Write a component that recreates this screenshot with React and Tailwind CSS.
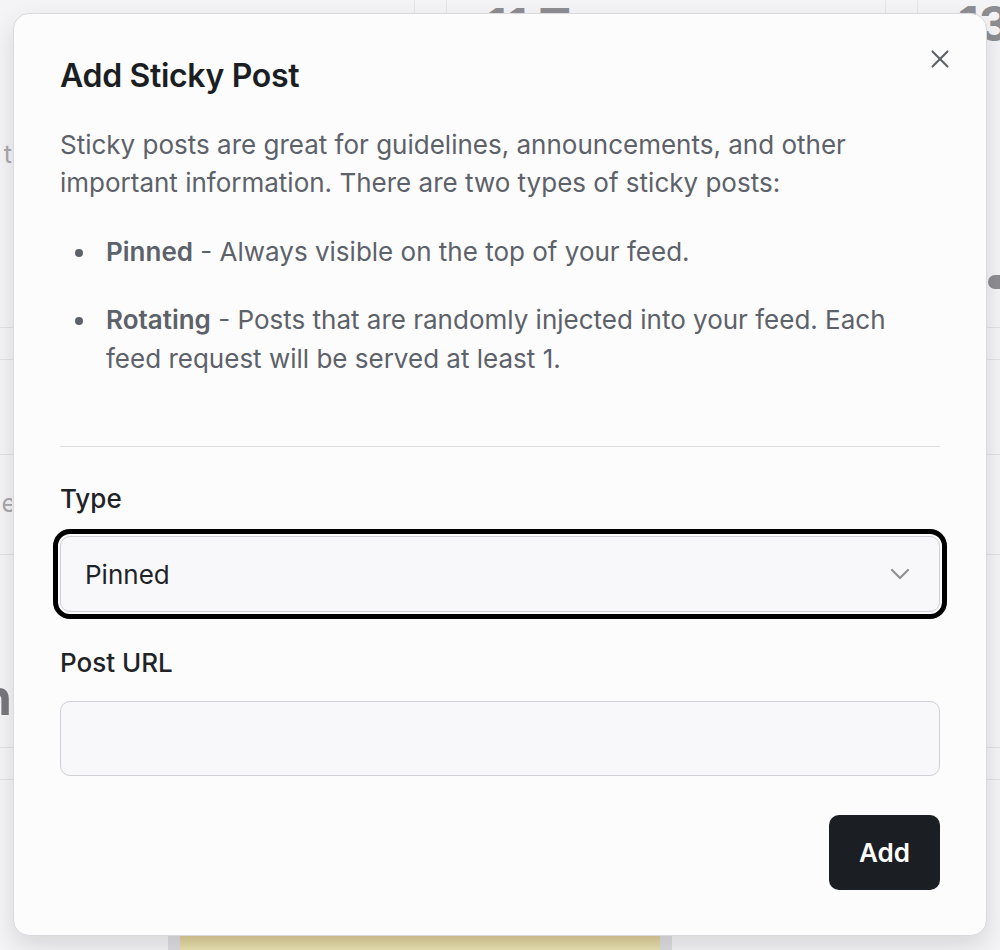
import { X } from 'lucide-react';

const ROWS = [
  { h: 'h-[280px]', left: 't', leftPad: 'pt-[88px]', leftTone: 'text-[#a8a8ad] font-normal text-[25px]', lump: true },
  { h: 'h-[32px]' },
  { h: 'h-[95px]' },
  { h: 'h-[100px]', left: 'e', leftPad: 'pt-[30px] -mr-[4px]', leftTone: 'text-[#a8a8ad] font-normal text-[25px]' },
  { h: 'h-[193px]', left: 'In', leftPad: 'pt-[112px]', leftTone: 'text-[#77777c] font-bold text-[50px] leading-[60px]' },
  { h: 'h-[32px]' },
];

function Backdrop() {
  return (
    <div className="flex h-full flex-col">
      <div className="flex h-[48px] shrink-0">
        <div className="w-[415px] border-r border-[#e4e4e8]" />
        <div className="w-[32px] border-r border-[#e4e4e8]" />
        <div className="w-[439px] overflow-hidden border-r border-[#e4e4e8] pl-[39px] pt-[2px] text-[48px] font-bold leading-[48px] text-[#8d8d92]">
          11 Tue
        </div>
        <div className="w-[32px] border-r border-[#e4e4e8]" />
        <div className="flex-1 overflow-hidden pl-[40px] text-[48px] font-bold leading-[48px] text-[#8d8d92]">
          13
        </div>
      </div>
      <div className="flex flex-col">
        {ROWS.map((row, i) => (
          <div key={i} className={`${row.h} flex justify-between overflow-hidden border-b border-[#e2e2e6]`}>
            <div className="w-[12px] overflow-hidden">
              {row.left && (
                <div className={`flex justify-end ${row.leftPad} ${row.leftTone}`}>{row.left}</div>
              )}
            </div>
            <div className="w-[13px]">
              {row.lump && <div className="ml-[1px] mt-[227px] h-[14px] w-[12px] rounded-l-full bg-[#8d8d92]" />}
            </div>
          </div>
        ))}
      </div>
      <div className="flex flex-1 flex-col justify-end">
        <div className="ml-[168px] h-[14px] w-[504px] border-x-[12px] border-[#dedee2] bg-gradient-to-b from-[#dccd98] to-[#ebe3b2]" />
      </div>
    </div>
  );
}

export default function App() {
  return (
    <div className="relative h-[950px] w-[1000px] overflow-hidden bg-[#f4f4f6] font-[Inter,'Noto_Sans',sans-serif]">
      <Backdrop />

      <div className="absolute left-[13px] top-[13px] h-[923px] w-[974px] rounded-[16px] border border-[#d9d9de] bg-[#fcfcfc] px-[46px] pt-[42px] shadow-[0_10px_24px_rgba(0,0,0,0.12)]">
        <button className="absolute right-[31px] top-[30px] text-[#5f6368]">
          <X size={30} strokeWidth={1.7} />
        </button>

        <h2 className="text-[32px] font-semibold leading-[40px] tracking-[-0.01em] text-[#1b1e22]">Add Sticky Post</h2>

        <p className="mt-[30px] text-[26px] leading-[38.4px] text-[#5d6169]">
          Sticky posts are great for guidelines, announcements, and other important information. There are two types of sticky posts:
        </p>

        <ul className="mt-[30px] space-y-[30px] text-[26px] leading-[38.4px] text-[#5d6169]">
          <li className="flex">
            <span className="ml-[15px] mr-[23px] mt-[16px] h-[8px] w-[8px] shrink-0 rounded-full bg-[#5d6169]" />
            <span>
              <strong className="font-semibold">Pinned</strong> - Always visible on the top of your feed.
            </span>
          </li>
          <li className="flex">
            <span className="ml-[15px] mr-[23px] mt-[16px] h-[8px] w-[8px] shrink-0 rounded-full bg-[#5d6169]" />
            <span>
              <strong className="font-semibold">Rotating</strong> - Posts that are randomly injected into your feed. Each feed request will be served at least 1.
            </span>
          </li>
        </ul>

        <div className="mt-[68px] border-t border-[#dcdce1]" />

        <label className="mt-[33px] block text-[26px] font-medium leading-[38.4px] text-[#1f2328]">Type</label>
        <div className="mt-[18px] flex h-[76px] items-center justify-between rounded-[10px] border border-[#cfcfd6] bg-[#f8f8fa] pl-[24px] pr-[29px] outline-[5px] outline-offset-[2px] outline-black">
          <span className="text-[26px] text-[#1f2328]">Pinned</span>
          <svg width="20" height="12" viewBox="0 0 20 12" fill="none" stroke="#8e9096" strokeWidth="2.2" strokeLinecap="round" strokeLinejoin="round">
            <path d="M2 2 L10 10 L18 2" />
          </svg>
        </div>

        <label className="mt-[32px] block text-[26px] font-medium leading-[38.4px] text-[#1f2328]">Post URL</label>
        <input className="mt-[18px] block h-[75px] w-full rounded-[10px] border border-[#cfcfd6] bg-[#f8f8fa] px-[24px] text-[26px] outline-none" />

        <div className="mt-[39px] flex justify-end">
          <button className="h-[75px] rounded-[10px] bg-[#1b1e22] px-[30px] text-[26px] font-semibold text-white">Add</button>
        </div>
      </div>
    </div>
  );
}
